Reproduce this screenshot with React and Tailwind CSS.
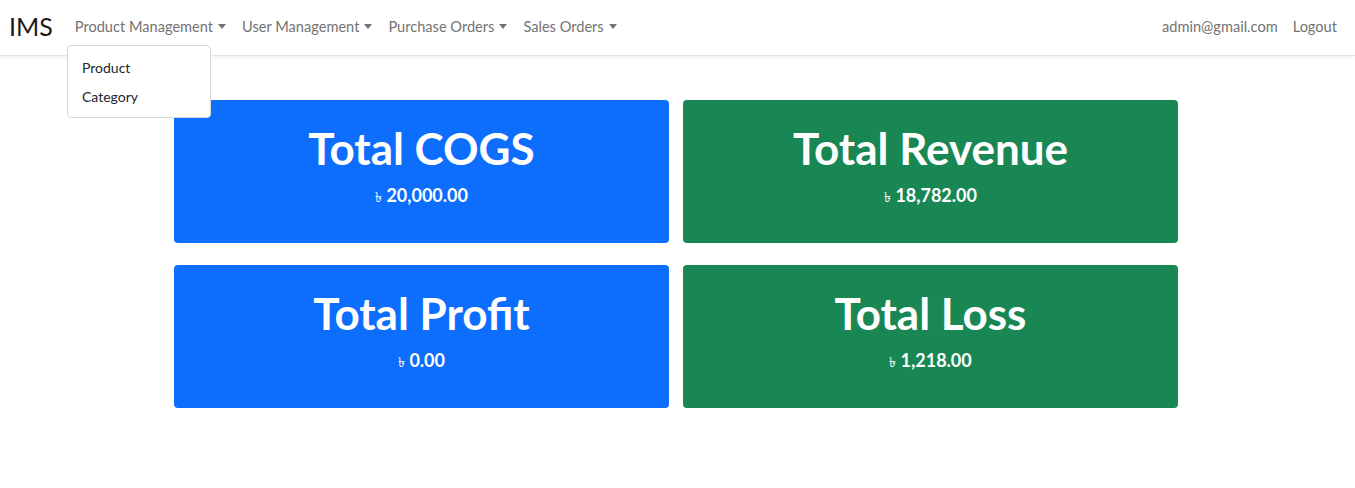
import React from "react";

const font = { fontFamily: "Lato, 'Noto Sans', sans-serif" };

function Caret() {
  return (
    <span className="ml-[5px] inline-block h-0 w-0 border-x-[4px] border-t-[5px] border-x-transparent border-t-[#737373] align-[3px]" />
  );
}

function Card({ title, value, color }) {
  return (
    <div className={`${color} flex h-[143px] flex-col items-center rounded-[4px] pt-[21px] text-white`}>
      <div className="text-[44px] font-bold leading-[54px]">{title}</div>
      <div className="mt-[7px] text-[18px] font-bold leading-[27px]">
        <span className="text-[14px] font-normal">৳</span> {value}
      </div>
    </div>
  );
}

export default function App() {
  return (
    <div className="relative min-h-[488px] bg-white" style={font}>
      <nav className="flex h-[56px] items-center border-b border-[#e5e5e5] bg-white pb-[2px] pl-[9px] pr-[18px] shadow-[0_2px_4px_rgba(0,0,0,0.06)]">
        <span className="mr-[22px] text-[25px] leading-none text-[#1a1a1a]">IMS</span>
        <div className="flex items-center gap-[16px] text-[14.6px] text-[#737373]">
          <span>Product Management<Caret /></span>
          <span>User Management<Caret /></span>
          <span>Purchase Orders<Caret /></span>
          <span>Sales Orders<Caret /></span>
        </div>
        <div className="ml-auto flex items-center gap-[15px] text-[14.6px] text-[#737373]">
          <span>admin@gmail.com</span>
          <span>Logout</span>
        </div>
      </nav>

      <div className="absolute left-[67px] top-[45px] z-10 w-[144px] rounded-[4px] border border-[#d9d9d9] bg-white pb-[6px] pt-[7px] text-[14px] text-[#212529]">
        <div className="px-[14px] leading-[29px]">Product</div>
        <div className="px-[14px] leading-[29px]">Category</div>
      </div>

      <div className="ml-[174px] mt-[44px] grid w-[1004px] grid-cols-2 gap-x-[14px] gap-y-[22px]">
        <Card title="Total COGS" value="20,000.00" color="bg-[#0d6efd]" />
        <Card title="Total Revenue" value="18,782.00" color="bg-[#198754]" />
        <Card title="Total Profit" value="0.00" color="bg-[#0d6efd]" />
        <Card title="Total Loss" value="1,218.00" color="bg-[#198754]" />
      </div>
    </div>
  );
}
